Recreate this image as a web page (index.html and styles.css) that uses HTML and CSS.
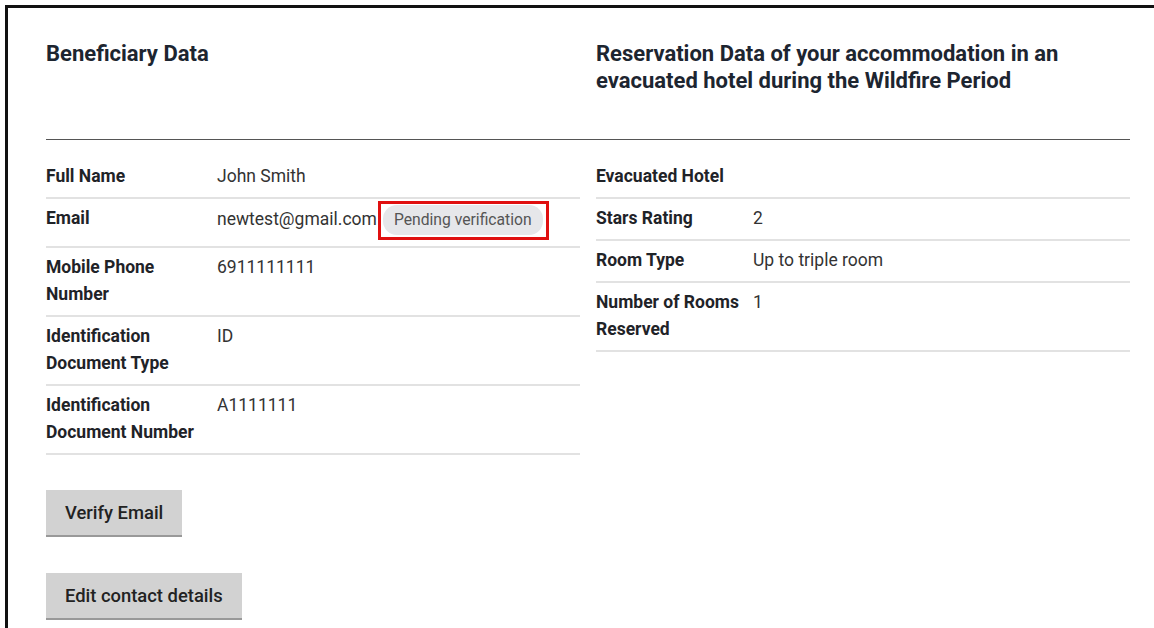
FILE: index.html
```html
<!DOCTYPE html>
<html lang="en">
<head>
<meta charset="utf-8">
<title>Beneficiary Data</title>
<link rel="stylesheet" href="styles.css">
</head>
<body>
<div class="frame">
  <div class="panel">
    <div class="heads">
      <h2 class="head">Beneficiary Data</h2>
      <h2 class="head">Reservation Data of your accommodation in an evacuated hotel during the Wildfire Period</h2>
    </div>
    <div class="cols">
      <section class="col">
        <dl class="table left">
          <div class="row"><dt>Full Name</dt><dd>John Smith</dd></div>
          <div class="row"><dt>Email</dt><dd>newtest@gmail.com<span class="badge">Pending verification</span></dd></div>
          <div class="row"><dt>Mobile Phone Number</dt><dd>6911111111</dd></div>
          <div class="row"><dt>Identification Document Type</dt><dd>ID</dd></div>
          <div class="row"><dt>Identification Document Number</dt><dd>A1111111</dd></div>
        </dl>
        <div class="actions">
          <button class="btn" type="button">Verify Email</button>
          <button class="btn" type="button">Edit contact details</button>
        </div>
      </section>
      <section class="col">
        <dl class="table right">
          <div class="row"><dt>Evacuated Hotel</dt><dd></dd></div>
          <div class="row"><dt>Stars Rating</dt><dd>2</dd></div>
          <div class="row"><dt>Room Type</dt><dd>Up to triple room</dd></div>
          <div class="row"><dt>Number of Rooms Reserved</dt><dd>1</dd></div>
        </dl>
      </section>
    </div>
  </div>
</div>
</body>
</html>
```

FILE: styles.css
```css
html, body {
  margin: 0;
  padding: 0;
  background: #fff;
}

body {
  font-family: Roboto, "Liberation Sans", Arial, sans-serif;
  color: #222;
  overflow: hidden;
}

.frame {
  margin: 5px 0 0 5px;
  border-top: 3px solid #111;
  border-left: 3px solid #111;
  min-height: 640px;
  box-sizing: border-box;
}

.panel {
  width: 1084px;
  padding: 32px 0 0 38px;
}

.heads {
  display: grid;
  grid-template-columns: 1fr 1fr;
  column-gap: 16px;
  padding-bottom: 45px;
  border-bottom: 1px solid #555;
}

.head {
  margin: 0;
  font-size: 22px;
  line-height: 27px;
  font-weight: 700;
  color: #1d2530;
  padding-right: 40px;
}

.cols {
  display: grid;
  grid-template-columns: 534px 534px;
  column-gap: 16px;
  padding-top: 17px;
}

.table {
  margin: 0;
}

.row {
  display: flex;
  border-bottom: 2px solid #e2e2e2;
  padding: 6px 0 7px;
  font-size: 17.5px;
  line-height: 27px;
}

.row dt {
  font-weight: 700;
  color: #1f2328;
  flex: none;
}

.left .row dt { width: 171px; }
.right .row dt { width: 157px; }

.row dd {
  margin: 0;
  color: #333;
  flex: 1;
}

.badge {
  position: relative;
  display: inline-block;
  margin: 0 0 4px 6px;
  padding: 2px 11px;
  font-size: 15.7px;
  line-height: 26px;
  color: #555;
  background: #e6e7ea;
  border-radius: 14px;
}

/* red highlight frame drawn around the status badge */
.badge::after {
  content: "";
  position: absolute;
  left: -5px;
  right: -6px;
  top: -4px;
  bottom: -5px;
  border: 3px solid #e01010;
}

.actions {
  display: flex;
  flex-direction: column;
  align-items: flex-start;
  gap: 36px;
  padding-top: 35px;
}

.btn {
  font-family: inherit;
  font-size: 18.4px;
  font-weight: 500;
  color: #222;
  background: #d2d2d2;
  border: 0;
  border-bottom: 2px solid #999;
  padding: 0 19px;
  height: 47px;
  line-height: 45px;
  cursor: pointer;
}
```
